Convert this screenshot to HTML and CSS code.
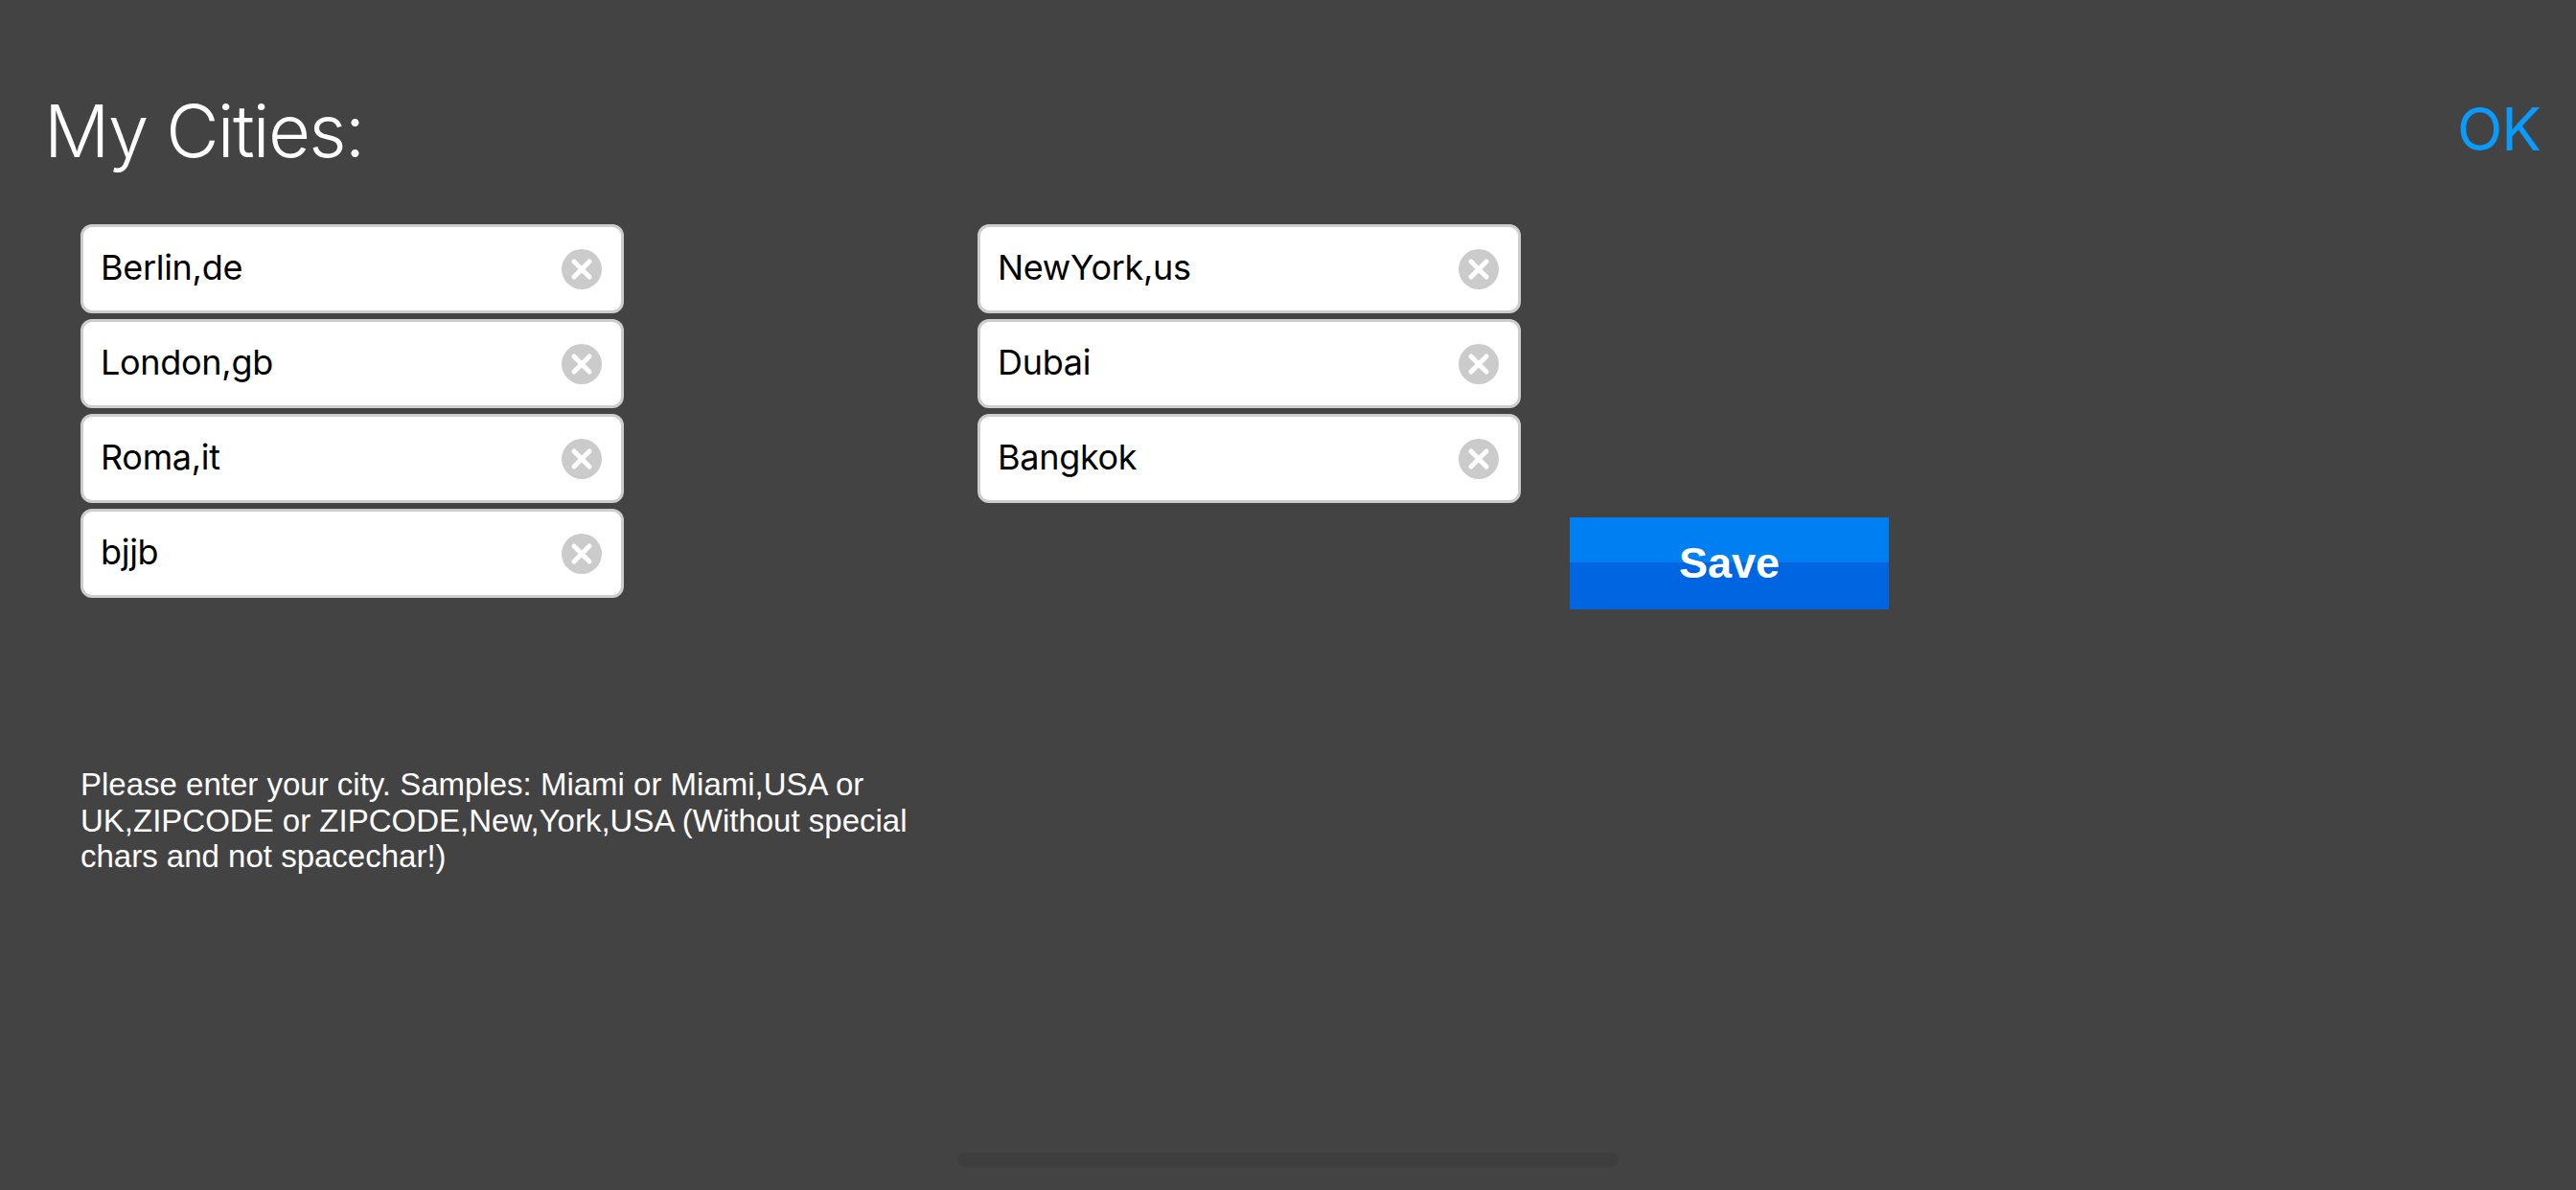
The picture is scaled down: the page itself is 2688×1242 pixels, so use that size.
FILE: index.html
```html
<!DOCTYPE html>
<html lang="en">
<head>
<meta charset="utf-8">
<title>My Cities</title>
<link rel="stylesheet" href="styles.css">
</head>
<body>
<svg class="defs" width="0" height="0" aria-hidden="true">
  <symbol id="clear" viewBox="0 0 42 42">
    <circle cx="21" cy="21" r="21" fill="#cbcbcb"/>
    <path d="M13 13 L29 29 M29 13 L13 29" stroke="#fff" stroke-width="5" stroke-linecap="round" fill="none"/>
  </symbol>
</svg>
<div class="page">
  <header class="top">
    <h1 class="title">My Cities:</h1>
    <span class="ok">OK</span>
  </header>
  <main class="columns">
    <section class="col col-left">
      <div class="fields">
        <div class="field"><span class="value">Berlin,de</span><svg class="clear"><use href="#clear"/></svg></div>
        <div class="field"><span class="value">London,gb</span><svg class="clear"><use href="#clear"/></svg></div>
        <div class="field"><span class="value">Roma,it</span><svg class="clear"><use href="#clear"/></svg></div>
        <div class="field"><span class="value">bjjb</span><svg class="clear"><use href="#clear"/></svg></div>
      </div>
      <p class="help">Please enter your city. Samples: Miami or Miami,USA or<br>UK,ZIPCODE or ZIPCODE,New,York,USA (Without special<br>chars and not spacechar!)</p>
    </section>
    <section class="col col-right">
      <div class="fields">
        <div class="field"><span class="value">NewYork,us</span><svg class="clear"><use href="#clear"/></svg></div>
        <div class="field"><span class="value">Dubai</span><svg class="clear"><use href="#clear"/></svg></div>
        <div class="field"><span class="value">Bangkok</span><svg class="clear"><use href="#clear"/></svg></div>
      </div>
      <button class="save">Save</button>
    </section>
  </main>
  <div class="home-bar"></div>
</div>
</body>
</html>
```
FILE: styles.css
```css
* { box-sizing: border-box; }
html, body { margin: 0; height: 100%; }
body { background: #434343; overflow: hidden; }
.defs { position: absolute; }

.page {
  height: 1242px;
  display: flex;
  flex-direction: column;
  font-family: "Liberation Sans", Arial, sans-serif;
}

.top {
  height: 234px;
  padding: 90px 37px 0 46px;
  display: flex;
  justify-content: space-between;
  align-items: flex-start;
}
.title {
  margin: 0;
  font-family: Inter, sans-serif;
  font-weight: 300;
  font-size: 76px;
  line-height: 92px;
  letter-spacing: -1.7px;
  color: #fff;
}
.ok {
  font-family: Inter, sans-serif;
  font-size: 62px;
  line-height: 90px;
  letter-spacing: -1px;
  color: #0a9bff;
}

.columns {
  flex: 1;
  display: flex;
  padding-left: 84px;
  gap: 454px;
}
.col { display: flex; flex-direction: column; }
.col-left { width: 482px; }
.col-right { width: 951px; }

.fields { display: flex; flex-direction: column; gap: 6px; width: 567px; }
.field {
  height: 93px;
  display: flex;
  align-items: center;
  justify-content: space-between;
  padding: 0 20px 0 18px;
  background: #fff;
  border: 3px solid #cdcdcd;
  border-radius: 12px;
}
.value {
  font-family: Inter, sans-serif;
  font-size: 36px;
  line-height: 40px;
  margin-top: -3px;
  letter-spacing: -0.3px;
  color: #000;
}
.clear { width: 42px; height: 42px; flex: none; }

.help {
  margin: 176px 0 0;
  width: 900px;
  font-size: 33px;
  line-height: 37.5px;
  color: #fff;
}

.save {
  align-self: flex-end;
  margin-top: 15px;
  width: 333px;
  height: 96px;
  padding: 0;
  border: 0;
  background: linear-gradient(to bottom, #007ff2 0, #007ff2 47px, #0065e0 47px, #0065e0 100%);
  font-family: "Liberation Sans", Arial, sans-serif;
  font-weight: 700;
  font-size: 45px;
  color: #fff;
}

.home-bar {
  align-self: center;
  width: 690px;
  height: 15px;
  margin-bottom: 24px;
  border-radius: 8px;
  background: #3e3e3e;
}
```
